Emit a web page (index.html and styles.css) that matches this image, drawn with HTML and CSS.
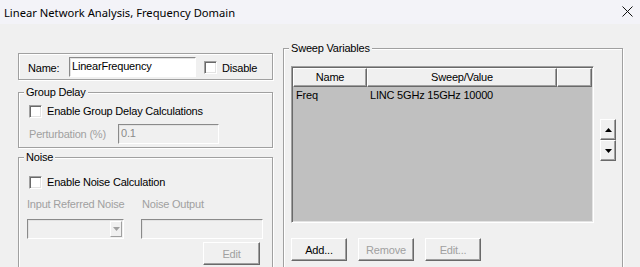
FILE: index.html
```html
<!DOCTYPE html>
<html lang="en">
<head>
    <meta charset="UTF-8">
    <title>Linear Network Analysis, Frequency Domain</title>
    <link rel="stylesheet" href="styles.css">
</head>
<body>
    <div class="titlebar">
        <span class="title">Linear Network Analysis, Frequency Domain</span>
        <svg class="close" width="11" height="11" viewBox="0 0 11 11">
            <path d="M0.5 0.5 L10.5 10.5 M10.5 0.5 L0.5 10.5" stroke="#111" stroke-width="1" fill="none"/>
        </svg>
    </div>

    <div class="dialog">
        <div class="left">
            <div class="namebox">
                <span class="name-label">Name:</span>
                <div class="field name-field">LinearFrequency</div>
                <span class="check disable-check"></span>
                <span class="check-label">Disable</span>
            </div>

            <fieldset class="group delay">
                <legend>Group Delay</legend>
                <div class="group-body">
                    <div class="check-row">
                        <span class="check"></span>
                        <span class="check-label">Enable Group Delay Calculations</span>
                    </div>
                    <div class="pert-row">
                        <span class="pert-label disabled">Perturbation (%)</span>
                        <div class="field off pert-field">0.1</div>
                    </div>
                </div>
            </fieldset>

            <fieldset class="group noise">
                <legend>Noise</legend>
                <div class="group-body">
                    <div class="check-row">
                        <span class="check"></span>
                        <span class="check-label">Enable Noise Calculation</span>
                    </div>
                    <div class="noise-labels disabled">
                        <span class="input-noise">Input Referred Noise</span>
                        <span>Noise Output</span>
                    </div>
                    <div class="noise-fields">
                        <div class="field off combo">
                            <span class="combo-btn">
                                <svg width="7" height="4" viewBox="0 0 7 4"><polygon points="0,0 7,0 3.5,4" fill="#a0a0a0"/></svg>
                            </span>
                        </div>
                        <div class="field off output-field"></div>
                    </div>
                    <button class="btn noise-edit" disabled>Edit</button>
                </div>
            </fieldset>
        </div>

        <fieldset class="group sweep">
            <legend>Sweep Variables</legend>
            <div class="group-body">
                <div class="sweep-main">
                    <div class="list">
                        <div class="list-head">
                            <span class="head-cell">Name</span>
                            <span class="head-cell">Sweep/Value</span>
                            <span class="head-cell"></span>
                        </div>
                        <div class="list-row">
                            <span>Freq</span>
                            <span>LINC 5GHz 15GHz 10000</span>
                        </div>
                    </div>
                    <div class="order">
                        <button class="btn arrow">
                            <svg width="7" height="4" viewBox="0 0 7 4"><polygon points="3.5,0 7,4 0,4" fill="#000"/></svg>
                        </button>
                        <button class="btn arrow">
                            <svg width="7" height="4" viewBox="0 0 7 4"><polygon points="0,0 7,0 3.5,4" fill="#000"/></svg>
                        </button>
                    </div>
                </div>
                <div class="sweep-buttons">
                    <button class="btn">Add...</button>
                    <button class="btn" disabled>Remove</button>
                    <button class="btn" disabled>Edit...</button>
                </div>
            </div>
        </fieldset>
    </div>
</body>
</html>
```

FILE: styles.css
```css
body, html {
    margin: 0;
    padding: 0;
    background: #f0f0f0;
    color: #000;
    font-family: "Liberation Sans", Arial, sans-serif;
    font-size: 11px;
    letter-spacing: -0.2px;
    overflow: hidden;
}

.titlebar {
    height: 24px;
    background: #f3f3f8;
    display: flex;
    align-items: center;
    justify-content: space-between;
    padding: 0 7px 0 4px;
    font-family: "Noto Sans", sans-serif;
    font-size: 11.2px;
    letter-spacing: 0;
}

.close {
    display: block;
    margin-top: -1px;
}

.dialog {
    box-sizing: border-box;
    display: flex;
    align-items: flex-start;
    height: 243px;
    overflow: hidden;
    padding: 18px 0 0 18px;
    gap: 10px;
}

.left {
    width: 255px;
    margin-top: 11px;
    display: flex;
    flex-direction: column;
}

/* etched group boxes */
.group,
.namebox {
    box-sizing: border-box;
    margin: 0;
    border: 1px solid #a0a0a0;
    box-shadow: inset 1px 1px 0 #fff, 1px 1px 0 #fff;
    min-width: 0;
}

.group {
    padding: 0;
}

.group legend {
    margin-left: 5px;
    padding: 0 2px;
    line-height: 13px;
    background: #f0f0f0;
}

.namebox {
    height: 27px;
    display: flex;
    align-items: flex-start;
    padding: 3px 0 0 9px;
}

.name-label {
    width: 41px;
    line-height: 20px;
    padding-top: 1px;
}

.field {
    box-sizing: border-box;
    height: 20px;
    background: #fff;
    border: 1px solid;
    border-color: #8a8a8a #fff #fff #8a8a8a;
    box-shadow: inset 1px 1px 0 #e3e3e3;
    padding: 0 2px;
    line-height: 17px;
}

.field.off {
    background: #f0f0f0;
    color: #8a8a8a;
}

.name-field {
    width: 127px;
}

.check {
    box-sizing: border-box;
    width: 13px;
    height: 13px;
    flex: none;
    background: #fff;
    border: 1px solid;
    border-color: #a0a0a0 #fff #fff #a0a0a0;
    box-shadow: inset 1px 1px 0 #696969, inset -1px -1px 0 #e3e3e3;
}

.disable-check {
    margin: 4px 0 0 8px;
}

.check-label {
    margin-left: 5px;
    line-height: 20px;
    padding-top: 1px;
}

.check-row .check-label {
    line-height: 13px;
    padding-top: 0;
}

.disabled {
    color: #a0a0a0;
}

.check-row {
    display: flex;
    align-items: center;
    height: 13px;
}

/* group delay */
.delay {
    margin-top: 6px;
    height: 62px;
}

.delay .group-body {
    padding: 6px 0 0 10px;
}

.pert-row {
    display: flex;
    margin-top: 6px;
}

.pert-label {
    width: 89px;
    line-height: 20px;
}

.pert-field {
    width: 101px;
}

/* noise */
.noise {
    margin-top: 3px;
    height: 130px;
}

.noise .group-body {
    padding: 12px 0 0 8px;
}

.noise .check-row {
    margin-left: 2px;
}

.noise-labels {
    display: flex;
    margin-top: 9px;
    line-height: 13px;
}

.input-noise {
    width: 115px;
}

.noise-fields {
    display: flex;
    margin-top: 8px;
}

.combo {
    width: 97px;
    margin-right: 17px;
    display: flex;
    justify-content: flex-end;
    align-items: center;
    padding: 0 1px;
}

.combo-btn {
    box-sizing: border-box;
    width: 12px;
    height: 16px;
    display: flex;
    align-items: center;
    justify-content: center;
    border: 1px solid;
    border-color: #fff #a0a0a0 #a0a0a0 #fff;
}

.output-field {
    width: 122px;
}

.btn {
    box-sizing: border-box;
    height: 23px;
    width: 56px;
    padding: 0;
    background: #f0f0f0;
    font-family: inherit;
    font-size: 11px;
    letter-spacing: -0.2px;
    color: #000;
    border: 1px solid;
    border-color: #fff #696969 #696969 #fff;
    box-shadow: inset -1px -1px 0 #a0a0a0;
    border-radius: 0;
}

.btn:disabled {
    color: #a0a0a0;
}

.noise-edit {
    display: block;
    width: 57px;
    margin: 3px 0 0 176px;
}

/* sweep variables */
.sweep {
    width: 340px;
    height: 240px;
}

.sweep .group-body {
    padding: 11px 0 0 7px;
}

.sweep-main {
    display: flex;
    align-items: flex-start;
}

.list {
    box-sizing: border-box;
    width: 303px;
    height: 157px;
    background: #c0c0c0;
    border: 1px solid;
    border-color: #a0a0a0 #fff #fff #a0a0a0;
    box-shadow: inset 1px 1px 0 #696969, inset -1px -1px 0 #e3e3e3;
    padding: 1px;
}

.list-head {
    display: grid;
    grid-template-columns: 74px 190px 1fr;
    height: 19px;
}

.head-cell {
    box-sizing: border-box;
    background: #f0f0f0;
    text-align: center;
    line-height: 16px;
    border: 1px solid;
    border-color: #fff #696969 #696969 #fff;
    box-shadow: inset -1px -1px 0 #a0a0a0;
}

.list-row {
    display: grid;
    grid-template-columns: 74px 1fr;
    height: 16px;
    line-height: 16px;
}

.list-row span {
    padding-left: 3px;
}

.order {
    display: flex;
    flex-direction: column;
    margin: 53px 0 0 6px;
}

.arrow {
    width: 16px;
    height: 21px;
    display: flex;
    align-items: center;
    justify-content: center;
}

.arrow svg {
    display: block;
}

.sweep-buttons {
    display: flex;
    gap: 11px;
    margin-top: 15px;
}
```
